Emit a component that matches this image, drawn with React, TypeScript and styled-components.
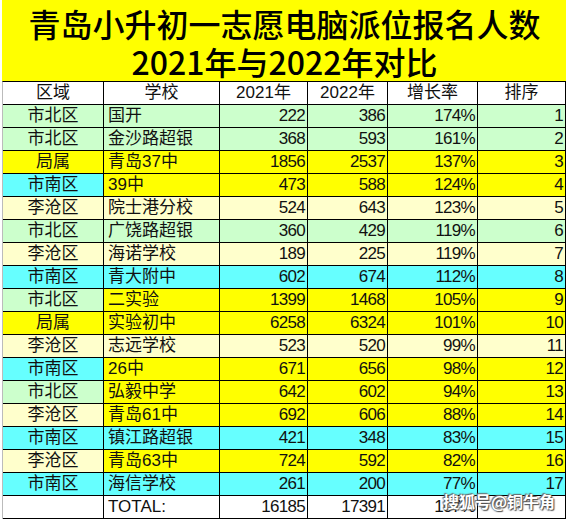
import React, { FunctionComponent } from 'react';
import styled, { createGlobalStyle } from 'styled-components';

const GlobalStyle = createGlobalStyle`
  body {
    margin: 0;
    background: #ffffff;
    font-family: "Liberation Sans", "Noto Sans CJK SC", sans-serif;
  }
`;

const colors = {
  g: '#ccffcc',
  y: '#ffff00',
  c: '#66ffff',
  l: '#ffffcc',
  w: '#ffffff',
};

type Fill = keyof typeof colors;

const Sheet = styled.div`
  position: relative;
  width: 568px;
  height: 519px;
  padding-left: 2px;
  box-sizing: border-box;
`;

const Title = styled.div`
  width: 564px;
  height: 81px;
  background: #ffff00;
  padding: 3px 0 0 1px;
  box-sizing: border-box;
  display: flex;
  flex-direction: column;
  align-items: center;
  justify-content: center;
  font-family: "Noto Sans CJK SC", sans-serif;
  font-weight: 500;
  font-size: 32px;
  line-height: 38px;
  color: #000;
`;

const Grid = styled.div`
  display: grid;
  grid-template-columns: 101px 116px 88px 80px 90px 88px;
  grid-auto-rows: 23px;
  border-top: 1px solid #000;
  border-left: 1px solid #bbb;
  width: 564px;
  box-sizing: border-box;
`;

interface CellProps {
  $bg: Fill;
  $align: 'left' | 'center' | 'right';
  $num?: boolean;
}

const Cell = styled.div<CellProps>`
  background: ${({ $bg }) => colors[$bg]};
  border-right: 1px solid #000;
  border-bottom: 1px solid #000;
  box-sizing: border-box;
  display: flex;
  align-items: center;
  justify-content: ${({ $align }) =>
    $align === 'left' ? 'flex-start' : $align === 'right' ? 'flex-end' : 'center'};
  padding: 0 ${({ $align }) => ($align === 'right' ? '2px' : '0')} 0
    ${({ $align }) => ($align === 'left' ? '4px' : '0')};
  font-size: 17px;
  line-height: 22px;
  color: #111;
  letter-spacing: ${({ $num }) => ($num ? '-0.7px' : '0')};
  white-space: nowrap;
  overflow: hidden;
`;

const Watermark = styled.div`
  position: absolute;
  left: 443px;
  top: 491px;
  font-family: "Noto Sans CJK SC", sans-serif;
  font-weight: 700;
  font-size: 16px;
  line-height: 20px;
  color: #ffffff;
  text-shadow: 0 0 2px #444, 1px 1px 1px #555, -1px -1px 1px #777;
`;

type Row = [string, string, number, number, string, number, Fill, Fill];

const rows: Row[] = [
  ['市北区', '国开', 222, 386, '174%', 1, 'g', 'g'],
  ['市北区', '金沙路超银', 368, 593, '161%', 2, 'g', 'g'],
  ['局属', '青岛37中', 1856, 2537, '137%', 3, 'y', 'y'],
  ['市南区', '39中', 473, 588, '124%', 4, 'c', 'y'],
  ['李沧区', '院士港分校', 524, 643, '123%', 5, 'l', 'l'],
  ['市北区', '广饶路超银', 360, 429, '119%', 6, 'g', 'g'],
  ['李沧区', '海诺学校', 189, 225, '119%', 7, 'l', 'l'],
  ['市南区', '青大附中', 602, 674, '112%', 8, 'c', 'c'],
  ['市北区', '二实验', 1399, 1468, '105%', 9, 'g', 'y'],
  ['局属', '实验初中', 6258, 6324, '101%', 10, 'y', 'y'],
  ['李沧区', '志远学校', 523, 520, '99%', 11, 'l', 'l'],
  ['市南区', '26中', 671, 656, '98%', 12, 'c', 'y'],
  ['市北区', '弘毅中学', 642, 602, '94%', 13, 'g', 'y'],
  ['李沧区', '青岛61中', 692, 606, '88%', 14, 'l', 'y'],
  ['市南区', '镇江路超银', 421, 348, '83%', 15, 'c', 'c'],
  ['李沧区', '青岛63中', 724, 592, '82%', 16, 'l', 'y'],
  ['市南区', '海信学校', 261, 200, '77%', 17, 'c', 'c'],
];

const headers = ['区域', '学校', '2021年', '2022年', '增长率', '排序'];

const App: FunctionComponent = () => (
  <>
    <GlobalStyle />
    <Sheet>
      <Title>
        <div>青岛小升初一志愿电脑派位报名人数</div>
        <div>2021年与2022年对比</div>
      </Title>
      <Grid>
        {headers.map(h => (
          <Cell key={h} $bg="w" $align="center">
            {h}
          </Cell>
        ))}
        {rows.map(([area, school, a, b, rate, rank, areaBg, bg]) => (
          <React.Fragment key={school}>
            <Cell $bg={areaBg} $align="center">{area}</Cell>
            <Cell $bg={bg} $align="left">{school}</Cell>
            <Cell $bg={bg} $align="right" $num>{a}</Cell>
            <Cell $bg={bg} $align="right" $num>{b}</Cell>
            <Cell $bg={bg} $align="right" $num>{rate}</Cell>
            <Cell $bg={bg} $align="right" $num>{rank}</Cell>
          </React.Fragment>
        ))}
        <Cell $bg="w" $align="center" />
        <Cell $bg="w" $align="left">TOTAL:</Cell>
        <Cell $bg="w" $align="right" $num>16185</Cell>
        <Cell $bg="w" $align="right" $num>17391</Cell>
        <Cell $bg="w" $align="right" $num>107%</Cell>
        <Cell $bg="w" $align="right" />
      </Grid>
      <Watermark>搜狐号@铜牛角</Watermark>
    </Sheet>
  </>
);

export default App;
